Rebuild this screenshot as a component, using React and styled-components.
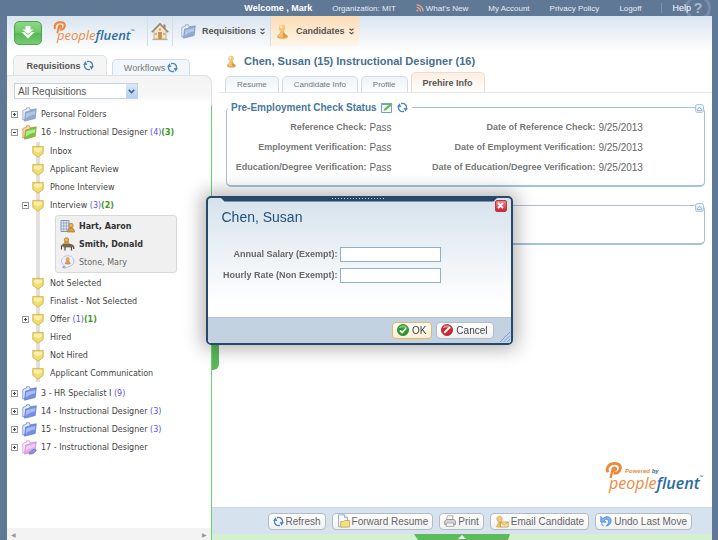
import React, { useState } from 'react';
import styled, { createGlobalStyle, css } from 'styled-components';

const GlobalStyle = createGlobalStyle`
  * {
    box-sizing: border-box;
  }

  body {
    margin: 0;
    background: #5f7896;
    color: #555;
    font-family: "Liberation Sans", Arial, sans-serif;
    font-size: 9px;
  }

  button, input, select {
    font-family: inherit;
    color: inherit;
  }

  button {
    cursor: pointer;
  }

  a {
    color: inherit;
    text-decoration: none;
  }

  svg {
    display: block;
    flex-shrink: 0;
  }
`

/* ---------- icons ---------- */

const RefreshIcon = ({ size = 11 }) => (
    <svg width={size} height={size} viewBox="0 0 12 12" fill="none" stroke="#4f86bd" strokeWidth="1.5">
        <path d="M7.600 10.100A4.300 4.300 0 0 1 2 4.500M4.400 1.900A4.300 4.300 0 0 1 10 7.500" />
        <path d="M0 5.200L2.800 1.400 4.800 5.400zM12 6.800L9.200 10.600 7.200 6.600z" fill="#4f86bd" stroke="none" />
    </svg>
)

const RssIcon = () => (
    <svg width="8" height="8" viewBox="0 0 8 8" fill="none" stroke="#e2a58b" strokeWidth="1.3">
        <circle cx="1.4" cy="6.6" r="1" fill="#e2a58b" stroke="none" />
        <path d="M.6 3.4a4 4 0 0 1 4 4M.6.9a6.500 6.500 0 0 1 6.500 6.500" />
    </svg>
)

const DownloadArrowIcon = () => (
    <svg width="16" height="14" viewBox="0 0 16 14" fill="#fff">
        <path d="M5.500 0h5v3.500h3L8 8 2.500 3.500h3z" />
        <path d="M1.500 6h3L8 9l3.500-3h3L8 12.500z" />
    </svg>
)

const HomeIcon = () => (
    <svg width="18" height="19" viewBox="0 0 18 19">
        <path d="M3 8.500L9 2.500l6 6V17H3z" fill="#f3e3c0" stroke="#c9a469" strokeWidth=".8" />
        <path d="M12.500 2.500h2v4l-2-2z" fill="#b9794b" />
        <path d="M.8 10.200L9 1.800l8.200 8.400" fill="none" stroke="#8c8377" strokeWidth="1.500" />
        <path d="M7.200 10h3.600v7H7.200z" fill="#c98b45" />
        <path d="M4 11h2v2H4zM12 11h2v2h-2z" fill="#9fb9d6" />
        <path d="M1.500 17.500h15" stroke="#a9b98d" strokeWidth="1.200" />
        <circle cx="9" cy="7.400" r="1" fill="#b9915a" />
    </svg>
)

const FolderIcon = ({ size = 15, light = '#b4c8e6', dark = '#8eaad2', back = '#e9eff8', edge = '#7f98be' }) => (
    <svg width={size} height={size} viewBox="0 0 15 15">
        <path d="M.8 3.500L4.500 2V.8h3L8 2.500v9L.8 13z" fill={back} stroke={edge} strokeWidth=".7" />
        <path d="M3.500 5l4-.8 1-1.400 5.800-1-1.100 9.700-10.700 2.700z" fill={dark} stroke={edge} strokeWidth=".7" />
        <path d="M4.300 6.200L13.300 4l-.5 3.500C9 8 6 9.500 3.700 12z" fill={light} />
    </svg>
)

const LockedFolderIcon = () => (
    <svg width="15" height="15" viewBox="0 0 15 15">
        <path d="M.8 3.500L4.500 2V.8h3L8 2.500v9L.8 13z" fill="#f8eefa" stroke="#c98fd0" strokeWidth=".7" />
        <path d="M3.500 5l4-.8 1-1.400 5.800-1-1.100 9.700-10.700 2.700z" fill="#e3abe5" stroke="#c98fd0" strokeWidth=".7" />
        <path d="M4.300 6.200L13.300 4l-.5 3C9 8 6 9 3.700 11z" fill="#f2cdf3" />
        <path d="M7 12.500l5-3.500 2.500 1-3 3.500-4 .8z" fill="#8b8fe0" stroke="#6a6ec7" strokeWidth=".6" />
    </svg>
)

const ShieldIcon = () => (
    <svg width="12" height="13" viewBox="0 0 12 13">
        <path d="M.8 1.200l2.500.5 2.700-.6 2.700.6 2.500-.5v7.200L6 12.300.8 8.400z" fill="#f2dc6b" stroke="#cdb45a" strokeWidth=".9" />
        <path d="M2 2.800l4 .3 4-.3v2.400L6 7.500 2 5.500z" fill="#fbf0a8" />
    </svg>
)

const PawnIcon = ({ width = 12, height = 15 }) => (
    <svg width={width} height={height} viewBox="0 0 12 15">
        <ellipse cx="6.500" cy="12.500" rx="5.300" ry="2.200" fill="#d99e4c" />
        <path d="M1.200 12c1.500-1 2.800-3 3.300-5h3c.5 2 1.700 4 3.300 5-2 2-7.500 2-9.600 0z" fill="#efbf72" />
        <circle cx="6" cy="4" r="3.300" fill="#f3c67c" />
        <circle cx="5" cy="3" r="1.400" fill="#fbe5b8" />
        <path d="M7.500 6.500c.6 2.300 1.600 4 3.200 5.500-1 1-2.500 1.300-3.700 1.300z" fill="#d8963f" />
    </svg>
)

const BuildingPersonIcon = () => (
    <svg width="15" height="14" viewBox="0 0 15 14">
        <path d="M1 1.500h8v11H1z" fill="#e3e7f0" stroke="#7f8cab" strokeWidth=".9" />
        <path d="M1 4h8M1 7h8M1 10h8M3.700 1.500v11M6.400 1.500v11" stroke="#97a4c2" strokeWidth=".8" />
        <circle cx="11" cy="6.500" r="2.200" fill="#e9b358" stroke="#9b6a22" strokeWidth=".6" />
        <path d="M7.500 13c.2-3 1.700-4.300 3.500-4.300s3.300 1.300 3.500 4.300z" fill="#dc9d3b" stroke="#9b6a22" strokeWidth=".6" />
    </svg>
)

const DeskPersonIcon = () => (
    <svg width="15" height="14" viewBox="0 0 15 14">
        <circle cx="6.500" cy="3" r="2.300" fill="#e9b358" stroke="#9b6a22" strokeWidth=".6" />
        <path d="M3.200 8.500c.2-2.600 1.500-3.600 3.300-3.600s3.200 1 3.400 3.600z" fill="#dc9d3b" stroke="#9b6a22" strokeWidth=".6" />
        <path d="M.5 8.200l3-1.200h8l3 2-2.500 1.500-8-.3z" fill="#7a6450" />
        <path d="M1.500 9v3.500M5 10v3.500M11.500 10v3.500M13.700 9.500V12" stroke="#54463a" strokeWidth="1.200" />
    </svg>
)

const BubblePersonIcon = () => (
    <svg width="15" height="14" viewBox="0 0 15 14">
        <path d="M8 .8c3.500 0 6 2.200 6 5.300 0 3-2.300 5.300-5.800 5.500L4.500 13.500l.6-2.500C3 10.200 1.500 8.500 1.500 6.100 1.500 3 4.500.8 8 .8z" fill="#eef0fd" stroke="#b4b9e6" strokeWidth=".9" />
        <circle cx="7.700" cy="4.200" r="1.600" fill="#e9b358" stroke="#b17c2e" strokeWidth=".5" />
        <path d="M5.300 9c.1-2.200 1-3.100 2.400-3.100s2.300.9 2.400 3.100z" fill="#dc9d3b" stroke="#b17c2e" strokeWidth=".5" />
        <circle cx="3.500" cy="12" r="1.200" fill="#9fa6e8" />
    </svg>
)

const EditIcon = () => (
    <svg width="12" height="11" viewBox="0 0 12 11">
        <path d="M.5 1.500h10v9H.5z" fill="#f3f9ff" stroke="#6d9fd0" />
        <path d="M.5 1h10v2H.5z" fill="#6aa6dc" />
        <path d="M2.500 9l1-2.500L9.500 1 11.500 2.500 5 8.200z" fill="#6fbb4b" />
    </svg>
)

const CollapseIcon = () => (
    <svg width="9" height="9" viewBox="0 0 9 9">
        <rect x=".5" y=".5" width="8" height="8" rx="2" fill="#e8f1f8" stroke="#a9c6dc" />
        <path d="M2.300 5.500L4.500 3.300l2.200 2.200v1.200H2.300z" fill="none" stroke="#84abc9" strokeWidth=".9" />
    </svg>
)

const ChevronIcon = () => (
    <svg width="7" height="5" viewBox="0 0 7 5" fill="none" stroke="#41608d" strokeWidth="1.600">
        <path d="M.7.8l2.800 2.800L6.300.8" />
    </svg>
)

const DoubleChevronIcon = () => (
    <svg width="5" height="7" viewBox="0 0 5 7" fill="none" stroke="#555" strokeWidth="1.100">
        <path d="M.5.700l2 1.600 2-1.600M.5 4.200l2 1.600 2-1.600" />
    </svg>
)

const OkIcon = () => (
    <svg width="12" height="12" viewBox="0 0 12 12">
        <circle cx="6" cy="6" r="5.600" fill="#2c9a2f" stroke="#1d7a22" strokeWidth=".7" />
        <path d="M1.500 4.500a4.700 4.700 0 0 1 9 0c-3-1.200-6-1.200-9 0z" fill="#7cca71" />
        <path d="M3 6.300l2.200 2.200L9.200 4" fill="none" stroke="#fff" strokeWidth="1.700" />
    </svg>
)

const CancelIcon = () => (
    <svg width="12" height="12" viewBox="0 0 12 12">
        <circle cx="6" cy="6" r="5.600" fill="#d0252b" stroke="#aa1b22" strokeWidth=".7" />
        <path d="M1.500 4.500a4.700 4.700 0 0 1 9 0c-3-1.200-6-1.200-9 0z" fill="#ea8a8b" />
        <path d="M3.200 8.800l5.600-5.600" stroke="#fff" strokeWidth="2" />
    </svg>
)

const CloseIcon = () => (
    <svg width="7" height="7" viewBox="0 0 7 7" stroke="#fff" strokeWidth="1.900">
        <path d="M1 1l5 5M6 1L1 6" />
    </svg>
)

const PageFolderIcon = () => (
    <svg width="13" height="14" viewBox="0 0 13 14">
        <path d="M1.500.8h6l3 3v9h-9z" fill="#f7fbff" stroke="#8fa8c6" strokeWidth=".9" />
        <path d="M7.500.8v3h3" fill="#dbe7f4" stroke="#8fa8c6" strokeWidth=".8" />
        <path d="M3.500 7.500h3l1-1h5v6.500h-9z" fill="#f6de83" stroke="#c9a94a" strokeWidth=".8" />
    </svg>
)

const PrintIcon = () => (
    <svg width="12" height="12" viewBox="0 0 12 12">
        <path d="M3.500.8h5.700l-1 4.500H2.500z" fill="#fff" stroke="#999" strokeWidth=".8" />
        <path d="M.7 6l2-1.500h7.500l1.200 1.500v3.500H.7z" fill="#d5d5d5" stroke="#888" strokeWidth=".8" />
        <path d="M2.500 8h7l.6 3.300H2z" fill="#fafafa" stroke="#999" strokeWidth=".8" />
    </svg>
)

const EmailPersonIcon = () => (
    <svg width="14" height="13" viewBox="0 0 14 13">
        <path d="M.7 11.500c1-1.200 2-2.800 2.300-4.500h2.600c.4 1.700 1.200 3.300 2.400 4.500-1.800 1.400-5.700 1.400-7.300 0z" fill="#eab85f" />
        <circle cx="4.500" cy="4" r="2.800" fill="#f2c67b" stroke="#d29a45" strokeWidth=".5" />
        <path d="M5.500 7h7.700v5H5.500z" fill="#fbe9a9" stroke="#bf9b46" strokeWidth=".8" />
        <path d="M5.500 7l3.800 2.800L13.200 7" fill="none" stroke="#bf9b46" strokeWidth=".8" />
    </svg>
)

const UndoIcon = () => (
    <svg width="12" height="12" viewBox="0 0 12 12">
        <path d="M.8 1.500v5.700h5.400L4.300 5.300c1.600-1.700 4-1 4.200 1.200.1 1.700-.8 3.200-2.500 4.700 3.200-.8 5.200-2.700 5.200-5.500C11.200 1.500 6.200.2 2.800 3.600z" fill="#79b2ec" stroke="#3f7fc4" strokeWidth=".7" />
        <path d="M1.200 8.500l2.600 2.700" stroke="#79b2ec" strokeWidth="1.300" />
    </svg>
)

const LogoMark = ({ size = 13 }) => (
    <svg width={size} height={size} viewBox="0 0 14 14" fill="none" stroke="#f08437">
        <path d="M2.300 8.500C.6 4 4 1.200 8 1.200c3.500 0 5.200 2 4.500 4.600C12 8.500 9.500 9.600 7 9.100" strokeWidth="2.300" />
        <path d="M4.600 13.200L6.300 5.700c.4-1.400 3-1.400 2.700.2-.2 1.100-1.500 1.400-2.500.9" strokeWidth="1.900" />
    </svg>
)

const ResizeGrip = () => (
    <svg width="10" height="10" viewBox="0 0 10 10" stroke="#7da2d2" strokeWidth="1">
        <path d="M0 10L10 0M3.500 10L10 3.500M7 10l3-3" />
    </svg>
)

/* ---------- page frame ---------- */

const Page = styled.div`
  display: flex;
  flex-direction: column;
  min-height: 100vh;
`

const TopBar = styled.nav`
  display: flex;
  align-items: center;
  justify-content: flex-end;
  gap: 20px;
  height: 16px;
  padding-right: 27px;
  overflow: hidden;
  position: relative;
  color: #e6ecf3;
  font-size: 8px;
  white-space: nowrap;
`

const Welcome = styled.span`
  color: #fff;
  font-size: 9px;
  font-weight: bold;
`

const TopLink = styled.a`
  display: flex;
  align-items: center;
  gap: 2px;
`

const HelpLink = styled.a`
  position: relative;
  padding-left: 10px;
  border-left: 1px solid #7e93ad;
  color: #fff;
  font-size: 9px;
`

const HelpBadge = styled.span`
  position: absolute;
  right: 7px;
  top: -5px;
  width: 26px;
  height: 26px;
  border: 3px solid #768ca8;
  border-radius: 50%;
  color: #a9b8ca;
  font-size: 14px;
  font-weight: bold;
  line-height: 20px;
  text-align: center;
`

const Shell = styled.div`
  display: flex;
  flex: 1;
  flex-direction: column;
  margin: 0 6px 0 7px;
  background: linear-gradient(#d9e4ef, #fff 36px);
`

const Header = styled.header`
  display: flex;
  align-items: flex-start;
  height: 39px;
  padding-left: 7px;
`

const QuickButton = styled.button`
  display: flex;
  align-items: center;
  justify-content: center;
  width: 28px;
  height: 24px;
  margin-top: 5px;
  padding: 0;
  border: 1px solid #4fa651;
  border-radius: 5px;
  background: linear-gradient(#8cd884, #6cc569 50%, #55b553 50%, #78cc72);
`

const Logo = styled.div`
  display: flex;
  flex-direction: column;
  width: 80px;
  margin: 5px 14px 0 11px;
`

const LogoText = styled.span`
  display: flex;
  margin-top: -7px;
  padding-left: 4px;
  color: #ee8a45;
  font-family: "Open Sans", sans-serif;
  font-size: 13px;
  font-style: italic;
  line-height: 16px;

  b {
    color: #2d6ba3;
    font-weight: 600;
  }

  sup {
    color: #2d6ba3;
    font-size: 5px;
    line-height: 8px;
  }
`

const NavItem = styled.a`
  display: flex;
  align-items: center;
  gap: 6px;
  height: 30px;
  padding: 0 5px 0 8px;
  border-left: 1px solid #d3dfeb;
  color: #555;
  font-weight: bold;
  ${({ $active }) => $active && css`
    gap: 8px;
    padding: 0 5px;
    background: linear-gradient(#fbdcb4, #fff6ea);
  `}

  span {
    display: flex;
    align-items: center;
    gap: 4px;
  }
`

const HomeItem = styled(NavItem)`
  padding: 0 3px;
`

const Columns = styled.div`
  display: grid;
  flex: 1;
  grid-template-columns: 205px minmax(0, 1fr);
`

/* ---------- sidebar ---------- */

const Sidebar = styled.aside`
  display: flex;
  flex-direction: column;
  position: relative;
`

const SideTabs = styled.div`
  display: flex;
  align-items: flex-end;
  gap: 5px;
  height: 20px;
  padding-left: 6px;
`

const SideTab = styled.button`
  display: flex;
  align-items: center;
  justify-content: center;
  gap: 2px;
  width: ${({ $active }) => ($active ? 94 : 78)}px;
  height: ${({ $active }) => ($active ? 20 : 16)}px;
  padding: 0;
  border: 1px solid ${({ $active }) => ($active ? '#dde2e6' : '#cfdde8')};
  border-bottom: 0;
  border-radius: 5px 5px 0 0;
  background: ${({ $active }) => ($active ? '#f5f5f5' : '#f2f7fb')};
  color: ${({ $active }) => ($active ? '#555' : '#777')};
  font-size: 9px;
  font-weight: ${({ $active }) => ($active ? 'bold' : 'normal')};
`

const PanelTop = styled.div`
  height: 30px;
  padding-top: 7px;
  border-top: 1px solid #dde2e6;
  border-right: 1px solid #dde2e6;
  border-radius: 0 8px 0 0;
  background: linear-gradient(#f4f4f4, #f7f7f7 20px, #fff);
`

const SidePanel = styled.div`
  flex: 1;
  border-right: 1px solid #66d66a;
  background: #fff;
`

const Picker = styled.label`
  display: flex;
  position: relative;
  width: 124px;
  height: 16px;
  margin-left: 7px;
`

const PickerSelect = styled.select`
  width: 100%;
  padding: 0 14px 0 3px;
  appearance: none;
  border: 1px solid #c3d3e3;
  background: #fff;
  font-size: 10px;
`

const PickerArrow = styled.span`
  display: flex;
  align-items: center;
  justify-content: center;
  position: absolute;
  top: 1px;
  right: 1px;
  width: 11px;
  height: 14px;
  background: linear-gradient(#dbe8fb, #b5cff2);
  pointer-events: none;
`

const List = styled.ul`
  margin: 0;
  padding: 0;
  list-style: none;
`

const Tree = styled(List)`
  color: #444;
  font-family: "DejaVu Sans", Verdana, sans-serif;
  font-size: 8px;
  white-space: nowrap;
`

const StageList = styled(List)`
  margin: 1px 0 2px;
  background: linear-gradient(#e3dfdf, #e3dfdf) 29px 0 / 4px 100% no-repeat;
`

const TreeRow = styled.div`
  display: flex;
  align-items: center;
  gap: 4px;
  height: 18px;
  padding-left: 4px;
`

const StageRow = styled(TreeRow)`
  gap: 3px;
  padding-left: 15px;

  a {
    padding-left: 3px;
  }
`

const Toggle = styled.button`
  width: 7px;
  height: 7px;
  padding: 0;
  border: 1px solid #999;
  background:
    linear-gradient(#444, #444) center / 3px 1px no-repeat,
    ${({ $open }) => ($open ? '' : 'linear-gradient(#444, #444) center / 1px 3px no-repeat,')}
    #fff;
`

const ToggleSpace = styled.span`
  width: 7px;
`

const Count = styled.span`
  color: ${({ $fresh }) => ($fresh ? '#3c9a1c' : '#5a55e8')};
  font-weight: ${({ $fresh }) => ($fresh ? 'bold' : 'normal')};
`

const PersonList = styled(List)`
  width: 122px;
  margin: 1px 0 1px 48px;
  padding: 1px 4px;
  border: 1px solid #d8d8d8;
  border-radius: 3px;
  background: #f0f0f0;
`

const PersonRow = styled.li`
  display: flex;
  align-items: center;
  gap: 4px;
  height: 18px;
  color: ${({ $bold }) => ($bold ? '#333' : '#666')};
  font-weight: ${({ $bold }) => ($bold ? 'bold' : 'normal')};
`

const SideScroll = styled.div`
  display: flex;
  align-items: center;
  justify-content: space-between;
  height: 12px;
  padding: 0 4px;
  border-right: 1px solid #66d66a;
  background: #f3f3f3;
  color: #999;
  font-size: 6px;
`

const SideHandle = styled.button`
  position: absolute;
  top: 189px;
  right: -7px;
  width: 7px;
  height: 126px;
  padding: 0;
  border: 0;
  border-radius: 0 6px 6px 0;
  background: #5cb85a;
`

/* ---------- main ---------- */

const Main = styled.main`
  display: flex;
  flex-direction: column;
`

const Title = styled.h1`
  display: flex;
  align-items: center;
  gap: 8px;
  height: 12px;
  margin: 0;
  padding-left: 14px;
  color: #47708f;
  font-size: 11px;
`

const Tabs = styled.div`
  display: flex;
  align-items: flex-end;
  gap: 3px;
  height: 26px;
  margin-left: 7px;
  padding-left: 6px;
  border-bottom: 1px solid #e3e7ea;
`

const Tab = styled.button`
  height: ${({ $active }) => ($active ? 20 : 16)}px;
  padding: 0 11px;
  border: 1px solid ${({ $active }) => ($active ? '#ecdccb' : '#cfdde8')};
  border-bottom: 0;
  border-radius: 5px 5px 0 0;
  background: ${({ $active }) => ($active ? 'linear-gradient(#fdeee0, #fff)' : 'linear-gradient(#eef4f9, #fbfdfe)')};
  color: ${({ $active }) => ($active ? '#555' : '#777')};
  font-size: ${({ $active }) => ($active ? 9 : 8)}px;
  font-weight: ${({ $active }) => ($active ? 'bold' : 'normal')};
`

const Content = styled.div`
  display: flex;
  flex: 1;
  flex-direction: column;
  gap: 18px;
  padding: 8px 7px 14px 14px;
`

const Section = styled.fieldset`
  position: relative;
  min-width: 0;
  min-height: ${({ $empty }) => ($empty ? 40 : 86)}px;
  margin: 0;
  padding: 4px 0 0;
  border: 1px solid #a3c3d8;
  border-bottom-width: 2px;
  border-radius: 5px;
`

const SectionTitle = styled.legend`
  display: flex;
  align-items: center;
  gap: 4px;
  height: 12px;
  margin-left: 1px;
  padding: 0 4px 0 3px;
  color: #47789c;
  font-size: 10px;
  font-weight: bold;
`

const CollapseButton = styled.button`
  position: absolute;
  top: ${({ $empty }) => ($empty ? -3 : -9)}px;
  right: 0;
  padding: 0;
  border: 0;
  background: #fff;
`

const Facts = styled.dl`
  display: grid;
  grid-template-columns: 140fr 56fr 168fr 106fr;
  grid-auto-rows: 20px;
  column-gap: 3px;
  align-items: center;
  margin: 0;
  white-space: nowrap;

  dt {
    justify-self: end;
    color: #777;
    font-weight: bold;
  }

  dd {
    margin: 0;
    color: #666;
    font-size: 10px;
  }
`

const PoweredBy = styled.div`
  align-self: flex-end;
  width: 100px;
  margin-top: auto;
`

const PoweredTop = styled.div`
  display: flex;
  align-items: center;
  gap: 3px;
  height: 17px;
  color: #ee8a45;
  font-size: 6px;
  font-style: italic;
  font-weight: bold;

  b {
    color: #2d6ba3;
  }
`

const BigLogoText = styled(LogoText)`
  margin-top: -6px;
  font-size: 16px;
  line-height: 20px;
`

const Toolbar = styled.div`
  display: flex;
  align-items: center;
  justify-content: flex-end;
  gap: 6px;
  height: 27px;
  padding-right: 20px;
  border-top: 1px solid #c9d7e6;
  background: #d7e2ef;
`

const Button = styled.button`
  display: flex;
  align-items: center;
  gap: 2px;
  height: 17px;
  padding: 0 4px;
  border: 1px solid #b3bbc6;
  border-radius: 4px;
  background: linear-gradient(#fff, #f1f1f3);
  color: #666;
  font-size: 10px;
  white-space: nowrap;
`

const DialogButton = styled(Button)`
  gap: 3px;
  padding: 0 5px 0 4px;
  color: #444;
  ${({ $primary }) => $primary && css`
    border-color: #f0b45c;
    background: linear-gradient(#fff, #fdeed3);
  `}
`

const BottomStrip = styled.div`
  display: flex;
  justify-content: center;
  height: 6px;
  background: #d5f0d0;
`

const BottomHandle = styled.button`
  display: flex;
  justify-content: center;
  width: 96px;
  height: 6px;
  padding: 1px 0 0;
  border: 0;
  background: #5cbb5b;
  clip-path: polygon(0 0, 100% 0, 94px 100%, 4px 100%);
`

/* ---------- dialog ---------- */

const Overlay = styled.div`
  display: flex;
  align-items: center;
  justify-content: center;
  position: fixed;
  inset: 0;
`

const Dialog = styled.form`
  position: relative;
  width: 307px;
  border: 2px solid #27476b;
  border-radius: 5px;
  background: linear-gradient(#d6e2ec, #fff 105px);
  box-shadow: 0 0 18px 5px rgba(0, 0, 0, .28);
`

const DragBar = styled.div`
  display: flex;
  justify-content: center;
  height: 4px;
  margin: 0 13px;
  background: #27476b;
  clip-path: polygon(0 0, 100% 0, calc(100% - 4px) 100%, 4px 100%);

  span {
    width: 54px;
    height: 1px;
    background: repeating-linear-gradient(90deg, #b8c8da 0 1px, transparent 1px 3px);
  }
`

const CloseButton = styled.button`
  display: flex;
  align-items: center;
  justify-content: center;
  position: absolute;
  top: 2px;
  right: 4px;
  width: 12px;
  height: 12px;
  padding: 0;
  border: 1px solid #b93a40;
  border-radius: 2px;
  background: linear-gradient(#f0848a, #d02630);
`

const DialogTitle = styled.h2`
  margin: 0;
  padding: 5px 14px 0;
  color: #24527c;
  font-size: 14px;
  font-weight: normal;
  line-height: 20px;
`

const Fields = styled.div`
  display: grid;
  grid-template-columns: 130px 101px;
  gap: 6px 2px;
  align-items: center;
  padding: 20px 0 34px;

  label {
    justify-self: end;
    color: #666;
    font-weight: bold;
    white-space: nowrap;
  }

  input {
    width: 100%;
    height: 15px;
    border: 1px solid #8eb0cc;
    background: #fff;
    font-size: 10px;
  }
`

const DialogFooter = styled.footer`
  display: flex;
  align-items: center;
  justify-content: flex-end;
  gap: 4px;
  position: relative;
  height: 26px;
  padding-right: 17px;
  border-top: 1px solid #b3c6d8;
  border-radius: 0 0 3px 3px;
  background: #c2d2e1;
`

const Grip = styled.span`
  position: absolute;
  right: 1px;
  bottom: 1px;
`

/* ---------- data ---------- */

const stages = [
    { name: 'Inbox' },
    { name: 'Applicant Review' },
    { name: 'Phone Interview' },
    {
        name: 'Interview', total: 3, fresh: 2, open: true,
        people: [
            { name: 'Hart, Aaron', icon: <BuildingPersonIcon />, bold: true },
            { name: 'Smith, Donald', icon: <DeskPersonIcon />, bold: true },
            { name: 'Stone, Mary', icon: <BubblePersonIcon /> },
        ],
    },
    { name: 'Not Selected' },
    { name: 'Finalist - Not Selected' },
    { name: 'Offer', total: 1, fresh: 1 },
    { name: 'Hired' },
    { name: 'Not Hired' },
    { name: 'Applicant Communication' },
]

const blueFolder = <FolderIcon light="#a9bdf6" dark="#7390e6" edge="#5a75cf" />

const folders = [
    { name: 'Personal Folders', icon: <FolderIcon /> },
    {
        name: '16 - Instructional Designer', total: 4, fresh: 3, open: true, stages,
        icon: <FolderIcon light="#b4ec86" dark="#6cc944" back="#fbd7a8" edge="#b98a3c" />,
    },
    { name: '3 - HR Specialist I', total: 9, icon: blueFolder },
    { name: '14 - Instructional Designer', total: 3, icon: blueFolder },
    { name: '15 - Instructional Designer', total: 3, icon: blueFolder },
    { name: '17 - Instructional Designer', icon: <LockedFolderIcon /> },
]

const facts = [
    ['Reference Check:', 'Pass'],
    ['Date of Reference Check:', '9/25/2013'],
    ['Employment Verification:', 'Pass'],
    ['Date of Employment Verification:', '9/25/2013'],
    ['Education/Degree Verification:', 'Pass'],
    ['Date of Education/Degree Verification:', '9/25/2013'],
]

const actions = [
    { name: 'Refresh', icon: <RefreshIcon /> },
    { name: 'Forward Resume', icon: <PageFolderIcon /> },
    { name: 'Print', icon: <PrintIcon /> },
    { name: 'Email Candidate', icon: <EmailPersonIcon /> },
    { name: 'Undo Last Move', icon: <UndoIcon /> },
]

const tabs = ['Resume', 'Candidate Info', 'Profile', 'Prehire Info']

const NodeLabel = ({ node }) => (
    <a href="#node">
        {node.name}{' '}
        {node.total && <Count>({node.total})</Count>}
        {node.fresh && <Count $fresh>({node.fresh})</Count>}
    </a>
)

const Stage = ({ stage }) => (
    <li>
        <StageRow>
            {stage.total ? <Toggle type="button" $open={stage.open} aria-label={stage.name} /> : <ToggleSpace />}
            <ShieldIcon />
            <NodeLabel node={stage} />
        </StageRow>
        {stage.people && (
            <PersonList>
                {stage.people.map(person => (
                    <PersonRow key={person.name} $bold={person.bold}>
                        {person.icon}
                        <a href="#person">{person.name}</a>
                    </PersonRow>
                ))}
            </PersonList>
        )}
    </li>
)

const RateDialog = ({ onClose }) => {
    const [salary, setSalary] = useState('')
    const [rate, setRate] = useState('')

    const handleSubmit = e => {
        e.preventDefault()
        onClose()
    }

    return (
        <Overlay>
            <Dialog role="dialog" aria-labelledby="dialog-title" onSubmit={handleSubmit}>
                <DragBar><span /></DragBar>
                <CloseButton type="button" aria-label="Close" onClick={onClose}><CloseIcon /></CloseButton>
                <DialogTitle id="dialog-title">Chen, Susan</DialogTitle>
                <Fields>
                    <label htmlFor="salary">Annual Salary (Exempt):</label>
                    <input id="salary" type="text" value={salary} onChange={e => setSalary(e.target.value)} />
                    <label htmlFor="rate">Hourly Rate (Non Exempt):</label>
                    <input id="rate" type="text" value={rate} onChange={e => setRate(e.target.value)} />
                </Fields>
                <DialogFooter>
                    <DialogButton type="submit" $primary><OkIcon />OK</DialogButton>
                    <DialogButton type="button" onClick={onClose}><CancelIcon />Cancel</DialogButton>
                    <Grip><ResizeGrip /></Grip>
                </DialogFooter>
            </Dialog>
        </Overlay>
    )
}

const App = () => {
    const [dialogOpen, setDialogOpen] = useState(true)

    return (
        <Page>
            <GlobalStyle />
            <TopBar>
                <Welcome>Welcome , Mark</Welcome>
                <span>Organization: MIT</span>
                <TopLink href="#news"><RssIcon />What's New</TopLink>
                <TopLink href="#account">My Account</TopLink>
                <TopLink href="#privacy">Privacy Policy</TopLink>
                <TopLink href="#logoff">Logoff</TopLink>
                <HelpBadge>?</HelpBadge>
                <HelpLink href="#help">Help</HelpLink>
            </TopBar>
            <Shell>
                <Header>
                    <QuickButton type="button" aria-label="Quick menu"><DownloadArrowIcon /></QuickButton>
                    <Logo>
                        <LogoMark />
                        <LogoText>people<b>fluent</b><sup>™</sup></LogoText>
                    </Logo>
                    <HomeItem href="#home" aria-label="Home"><HomeIcon /></HomeItem>
                    <NavItem href="#requisitions">
                        <FolderIcon />
                        <span>Requisitions<DoubleChevronIcon /></span>
                    </NavItem>
                    <NavItem href="#candidates" $active>
                        <PawnIcon />
                        <span>Candidates<DoubleChevronIcon /></span>
                    </NavItem>
                </Header>
                <Columns>
                    <Sidebar>
                        <SideTabs>
                            <SideTab type="button" $active>Requisitions<RefreshIcon /></SideTab>
                            <SideTab type="button">Workflows<RefreshIcon /></SideTab>
                        </SideTabs>
                        <PanelTop>
                            <Picker>
                                <PickerSelect aria-label="Requisition filter">
                                    <option>All Requisitions</option>
                                </PickerSelect>
                                <PickerArrow><ChevronIcon /></PickerArrow>
                            </Picker>
                        </PanelTop>
                        <SidePanel>
                            <Tree>
                                {folders.map(folder => (
                                    <li key={folder.name}>
                                        <TreeRow>
                                            <Toggle type="button" $open={folder.open} aria-label={folder.name} />
                                            {folder.icon}
                                            <NodeLabel node={folder} />
                                        </TreeRow>
                                        {folder.stages && (
                                            <StageList>
                                                {folder.stages.map(stage => <Stage stage={stage} key={stage.name} />)}
                                            </StageList>
                                        )}
                                    </li>
                                ))}
                            </Tree>
                        </SidePanel>
                        <SideScroll><span>◀</span><span>▶</span></SideScroll>
                        <SideHandle type="button" aria-label="Collapse sidebar" />
                    </Sidebar>
                    <Main>
                        <Title><PawnIcon width={10} height={13} />Chen, Susan (15) Instructional Designer (16)</Title>
                        <Tabs>
                            {tabs.map(tab => <Tab type="button" key={tab} $active={tab === 'Prehire Info'}>{tab}</Tab>)}
                        </Tabs>
                        <Content>
                            <Section>
                                <SectionTitle>Pre-Employment Check Status<EditIcon /><RefreshIcon /></SectionTitle>
                                <CollapseButton type="button" aria-label="Collapse section"><CollapseIcon /></CollapseButton>
                                <Facts>
                                    {facts.map(([label, value]) => (
                                        <React.Fragment key={label}>
                                            <dt>{label}</dt>
                                            <dd>{value}</dd>
                                        </React.Fragment>
                                    ))}
                                </Facts>
                            </Section>
                            <Section $empty>
                                <CollapseButton type="button" $empty aria-label="Collapse section"><CollapseIcon /></CollapseButton>
                            </Section>
                            <PoweredBy>
                                <PoweredTop><LogoMark size={17} /><span>Powered <b>by</b></span></PoweredTop>
                                <BigLogoText>people<b>fluent</b><sup>™</sup></BigLogoText>
                            </PoweredBy>
                        </Content>
                        <Toolbar>
                            {actions.map(action => (
                                <Button type="button" key={action.name}>{action.icon}{action.name}</Button>
                            ))}
                        </Toolbar>
                        <BottomStrip>
                            <BottomHandle type="button" aria-label="Expand panel">
                                <svg width="8" height="4" viewBox="0 0 8 4"><path d="M4 0l4 4H0z" fill="#fff" /></svg>
                            </BottomHandle>
                        </BottomStrip>
                    </Main>
                </Columns>
            </Shell>
            {dialogOpen && <RateDialog onClose={() => setDialogOpen(false)} />}
        </Page>
    )
}

export default App;
